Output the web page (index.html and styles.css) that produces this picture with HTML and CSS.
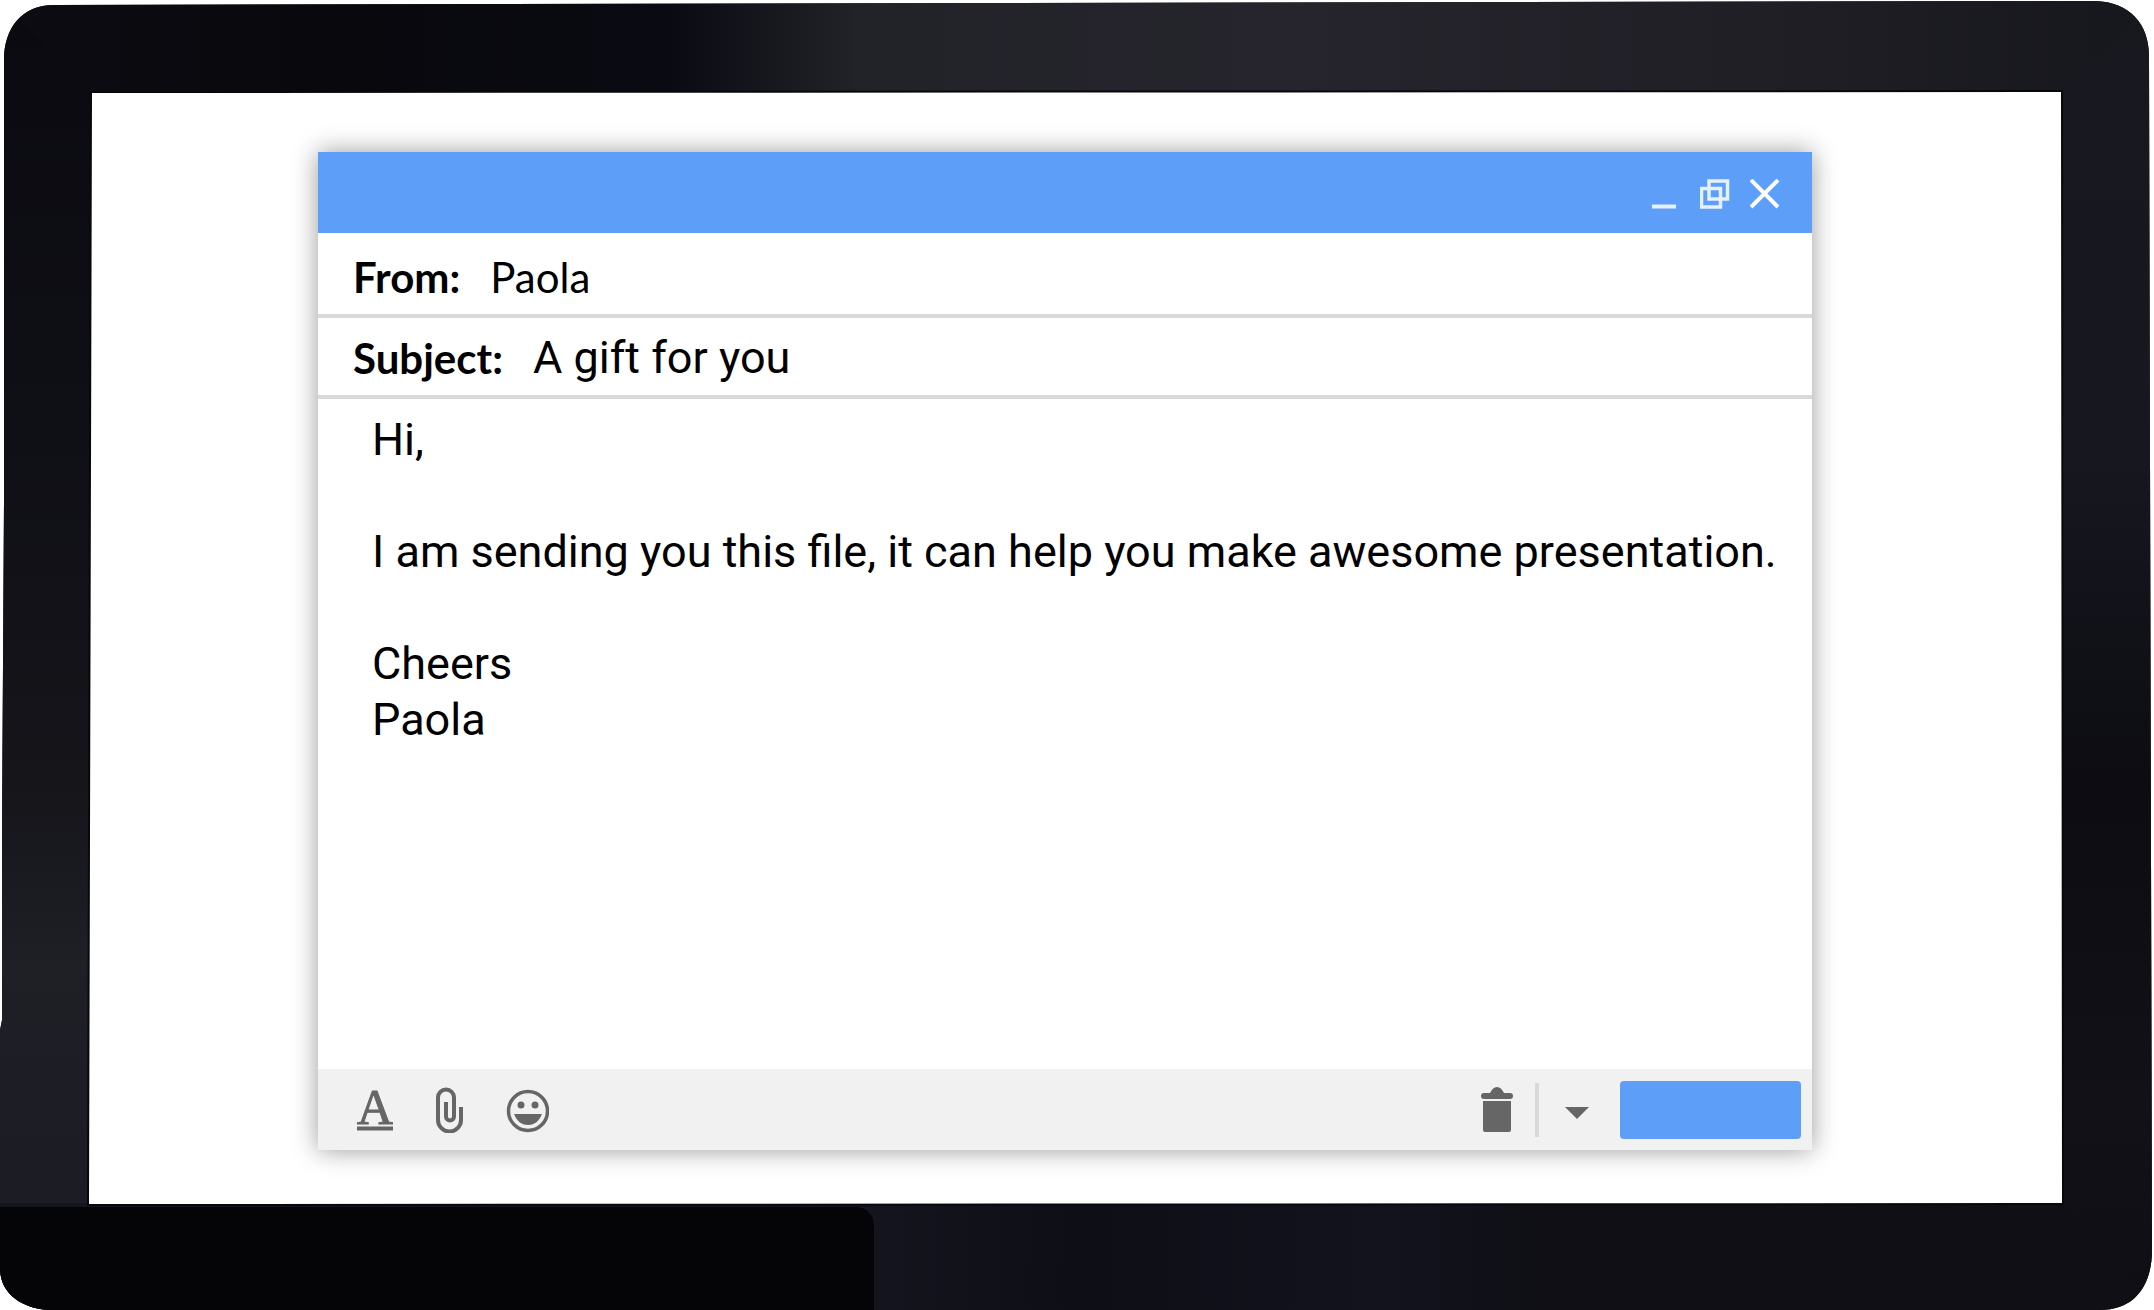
FILE: index.html
```
<!DOCTYPE html>
<html lang="en">
<head>
    <meta charset="UTF-8">
    <meta name="viewport" content="width=device-width, initial-scale=1.0">
    <title>A gift for you</title>
    <link rel="stylesheet" href="styles.css">
</head>
<body>
    <div class="monitor">
        <svg class="monitor-frame" viewBox="0 0 2154 1310" preserveAspectRatio="none" aria-hidden="true">
            <defs>
                <linearGradient id="topEdge" x1="0" x2="1" y1="0" y2="0">
                    <stop offset="0" stop-color="#0c0c12"/>
                    <stop offset="0.15" stop-color="#08080d"/>
                    <stop offset="0.31" stop-color="#0a0b12"/>
                    <stop offset="0.4" stop-color="#222229"/>
                    <stop offset="0.6" stop-color="#26252d"/>
                    <stop offset="0.85" stop-color="#1f1e25"/>
                    <stop offset="1" stop-color="#16161d"/>
                </linearGradient>
                <linearGradient id="leftEdge" x1="0" x2="0" y1="0" y2="1">
                    <stop offset="0" stop-color="#0a0a10"/>
                    <stop offset="0.35" stop-color="#0f0f16"/>
                    <stop offset="0.65" stop-color="#15151a"/>
                    <stop offset="0.8" stop-color="#1e2026"/>
                    <stop offset="1" stop-color="#1c1c24"/>
                </linearGradient>
                <linearGradient id="rightEdge" x1="0" x2="0" y1="0" y2="1">
                    <stop offset="0" stop-color="#18181f"/>
                    <stop offset="0.35" stop-color="#171720"/>
                    <stop offset="0.6" stop-color="#0c0c12"/>
                    <stop offset="0.85" stop-color="#111117"/>
                    <stop offset="1" stop-color="#0e0e14"/>
                </linearGradient>
                <linearGradient id="bottomEdge" x1="0" x2="1" y1="0" y2="0">
                    <stop offset="0.4" stop-color="#14151e"/>
                    <stop offset="0.5" stop-color="#0e0e16"/>
                    <stop offset="0.64" stop-color="#12131d"/>
                    <stop offset="0.72" stop-color="#0f0f15"/>
                    <stop offset="1" stop-color="#0f0f15"/>
                </linearGradient>
                <clipPath id="outline">
                    <path d="M4 60C4 28 22 5 54 5L1000 3L2095 1C2130 2 2149 24 2149 56L2152 1250C2152 1284 2136 1310 2100 1310H48C22 1308 0 1294 0 1268V1030L2 1020V830L4 500Z"/>
                </clipPath>
            </defs>
            <g clip-path="url(#outline)">
                <path d="M0 0H2154V1310H0Z" fill="#101016"/>
                <path d="M0 0H2154L2062 92H91Z" fill="url(#topEdge)"/>
                <path d="M0 0L91 92L88 1207H0Z" fill="url(#leftEdge)"/>
                <path d="M2154 0V1310L2063 1204L2062 91Z" fill="url(#rightEdge)"/>
                <path d="M0 1203H2063L2154 1310H0Z" fill="url(#bottomEdge)"/>
                <path d="M0 1207H854Q874 1207 874 1228V1310H0Z" fill="#050507"/>
            </g>
            <path d="M91 92L2062 91L2063 1204L88 1205Z" fill="#fff" stroke="#08080c" stroke-width="2"/>
        </svg>

        <form class="mail">
            <div class="title-bar">
                <button type="button" class="window-button" aria-label="Minimize">
                    <svg width="30" height="30" viewBox="0 0 30 30"><path d="M2 27.500H26" stroke="#fff" stroke-opacity="0.85" stroke-width="4"/></svg>
                </button>
                <button type="button" class="window-button" aria-label="Restore">
                    <svg width="30" height="30" viewBox="0 0 30 30"><path d="M9 2H27.500V20H9ZM1.500 9.500H20.500V28H1.500Z" fill="none" stroke="#fff" stroke-opacity="0.85" stroke-width="3.500"/></svg>
                </button>
                <button type="button" class="window-button" aria-label="Close">
                    <svg width="30" height="30" viewBox="0 0 30 30"><path d="M1 1L28 28M28 1L1 28" stroke="#fff" stroke-width="4"/></svg>
                </button>
            </div>

            <div class="field from-field">
                <label for="from">From:</label>
                <input type="text" id="from" name="from" value="Paola">
            </div>
            <div class="field">
                <label for="subject">Subject:</label>
                <input type="text" id="subject" name="subject" value="A gift for you">
            </div>

            <textarea class="message" name="message" aria-label="Message" spellcheck="false">Hi,

I am sending you this file, it can help you make awesome presentation.

Cheers
Paola</textarea>

            <div class="toolbar">
                <button type="button" class="tool" aria-label="Formatting">
                    <svg width="36" height="70" viewBox="0 -12 36 70"><text x="18" y="37" text-anchor="middle" class="format-letter">A</text><path d="M0 41.500H36" stroke="#666" stroke-width="4"/></svg>
                </button>
                <button type="button" class="tool" aria-label="Attach file">
                    <svg width="28" height="46" viewBox="0 0 28 46"><path d="M26 20V33A11.500 11.500 0 0 1 3 33V10.500A8 8 0 0 1 19 10.500V29.500A3.500 3.500 0 0 1 11 29.500V15" fill="none" stroke="#666" stroke-width="4"/></svg>
                </button>
                <button type="button" class="tool" aria-label="Insert emoji">
                    <svg width="44" height="46" viewBox="0 0 44 46"><circle cx="23" cy="24" r="19.500" fill="none" stroke="#666" stroke-width="3.500"/><circle cx="16" cy="18" r="3.500" fill="#666"/><circle cx="30" cy="18" r="3.500" fill="#666"/><path d="M9 27H37C34 34 30 38 23 38S12 34 9 27Z" fill="#666"/></svg>
                </button>
                <button type="button" class="tool delete" aria-label="Delete">
                    <svg width="32" height="46" viewBox="0 0 32 46"><path d="M3 6H9C11 2 13 0 16 0S21 2 23 6H29Q32 6 32 9T29 12H3Q0 12 0 9T3 6ZM2 14H30V43Q30 45 28 45H4Q2 45 2 43Z" fill="#666"/></svg>
                </button>
                <span class="divider"></span>
                <button type="button" class="tool more" aria-label="More options">
                    <svg width="24" height="12" viewBox="0 0 24 12"><path d="M0 0H24L12 12Z" fill="#666"/></svg>
                </button>
                <button type="submit" class="send" aria-label="Send"></button>
            </div>
        </form>
    </div>
</body>
</html>
```
FILE: styles.css
```
* {
    box-sizing: border-box;
}

body {
    margin: 0;
    background-color: #fff;
    font-family: Roboto, Arial, sans-serif;
    color: #000;
}

.monitor {
    position: relative;
    display: flex;
    min-height: 100vh;
    padding: 152px 342px 160px 318px;
}

.monitor-frame {
    position: absolute;
    top: 0;
    left: 0;
    width: 100%;
    height: 100%;
}

.mail {
    position: relative;
    flex: 1;
    display: flex;
    flex-direction: column;
    background-color: #fff;
    box-shadow: 0 0 24px rgba(0, 0, 0, 0.4);
}

button,
input,
textarea {
    margin: 0;
    padding: 0;
    border: none;
    background: none;
    color: inherit;
    font: inherit;
    outline: none;
}

button {
    cursor: pointer;
}

svg {
    display: block;
}

.title-bar {
    display: flex;
    justify-content: flex-end;
    align-items: center;
    gap: 20px;
    height: 81px;
    padding: 2px 32px 0 0;
    background-color: #5d9ef8;
}

.field {
    display: flex;
    align-items: center;
    gap: 30px;
    height: 81px;
    padding: 2px 35px 0;
    border-bottom: 4px solid #d9d9d9;
}

.field label {
    font-family: Lato, sans-serif;
    font-size: 42px;
    font-weight: bold;
}

.field input {
    flex: 1;
    min-width: 0;
    font-size: 45px;
}

.from-field {
    height: 85px;
    padding-top: 6px;
}

.from-field input {
    font-family: Lato, sans-serif;
    font-size: 42px;
}

.message {
    flex: 1;
    padding: 13px 20px 12px 54px;
    font-size: 45px;
    line-height: 56px;
    resize: none;
}

.toolbar {
    display: flex;
    align-items: center;
    height: 81px;
    padding: 0 11px 0 39px;
    gap: 42px;
    background-color: #f1f1f1;
}

.format-letter {
    font-family: "Liberation Serif", serif;
    font-size: 50px;
    fill: #666;
    stroke: #666;
    stroke-width: 1px;
}

.delete {
    margin-left: auto;
}

.divider {
    width: 4px;
    height: 54px;
    margin-left: -20px;
    background-color: #d9d9d9;
}

.more {
    margin: 6px -11px 0 -16px;
}

.send {
    width: 181px;
    height: 58px;
    border-radius: 4px;
    background-color: #5d9ef8;
}
```
